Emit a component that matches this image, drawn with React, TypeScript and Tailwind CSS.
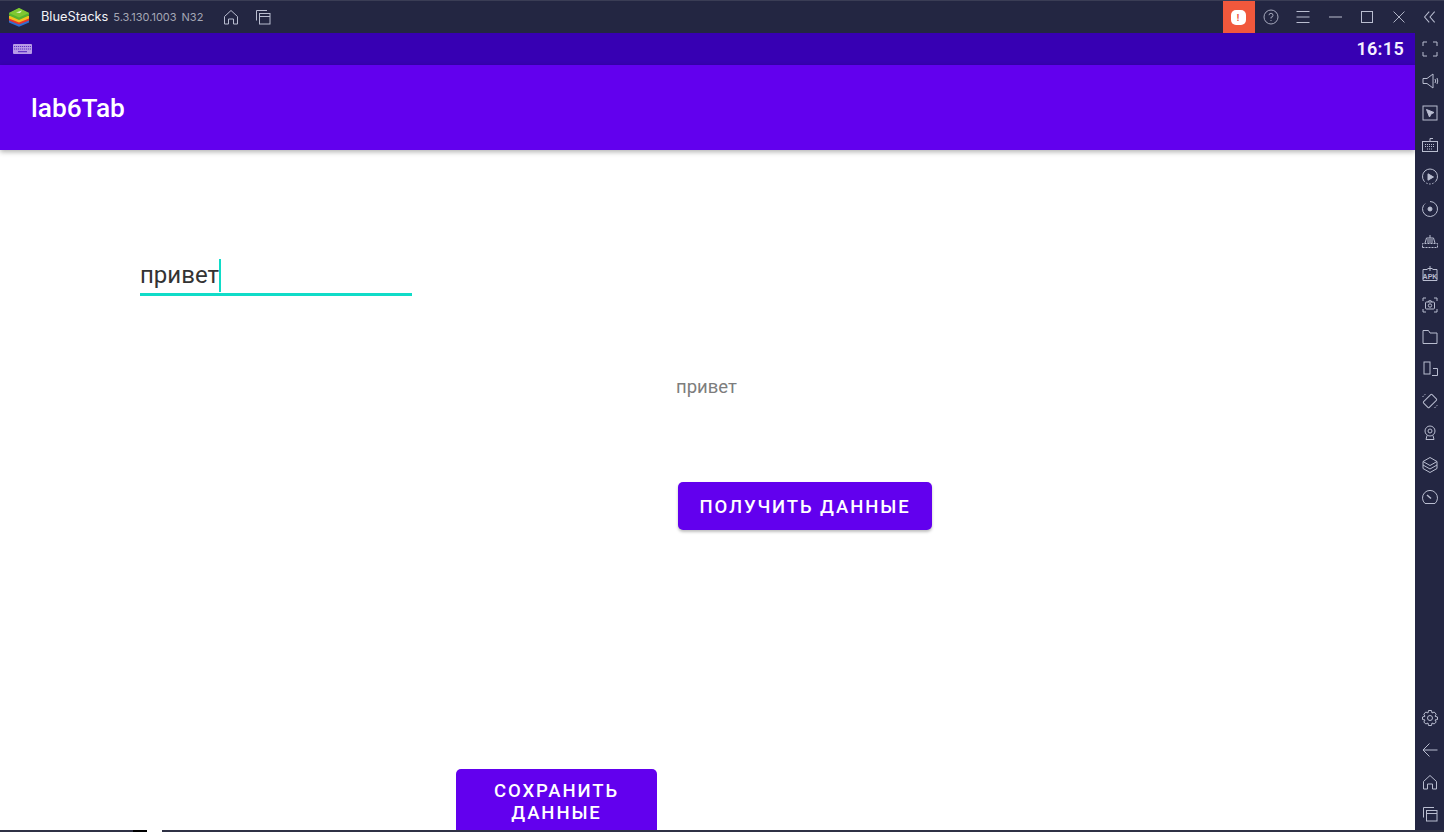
import React from 'react';

const stroke = '#b9bdd0';

const Ico: React.FC<{ size?: number; children: React.ReactNode }> = ({ size = 18, children }) => (
  <svg width={size} height={size} viewBox="0 0 18 18" fill="none" stroke={stroke} strokeWidth="1" className="block">
    {children}
  </svg>
);

const Logo = () => (
  <svg width="22" height="20" viewBox="0 0 22 20" className="block">
    <path d="M11 9 L21 13 L21 15.5 L11 19.8 L1 15.5 L1 13Z" fill="#2f6fd0" />
    <path d="M11 7 L21 11 L21 13.5 L11 17.5 L1 13.5 L1 11Z" fill="#e8352c" />
    <path d="M11 5 L21 9 L21 11.5 L11 15.5 L1 11.5 L1 9Z" fill="#f4c020" />
    <path d="M11 1 L21 6 L21 8.5 L11 13 L1 8.5 L1 6Z" fill="#55b32f" />
    <path d="M11 1 L21 6 L11 10.5 L1 6Z" fill="#7fc832" />
    <path d="M8 5.5 L14 3.5 L12 6 Z" fill="#e8f5d0" />
  </svg>
);

const HomeIcon = ({ size = 18 }: { size?: number }) => (
  <Ico size={size}>
    <path d="M2.5 8.5 L9 2.5 L15.5 8.5 V16 H11.5 V11 H6.5 V16 H2.5Z" strokeLinejoin="round" />
  </Ico>
);

const RecentsIcon = ({ size = 18 }: { size?: number }) => (
  <Ico size={size}>
    <path d="M2.5 12.5 V2.5 H13" />
    <rect x="5.5" y="5.5" width="10.5" height="10.5" />
    <path d="M5.5 8.5 H16" />
  </Ico>
);

const sideTop: React.ReactNode[] = [
  <path key="a" d="M2 6 V2 H6 M12 2 H16 V6 M16 12 V16 H12 M6 16 H2 V12" />,
  <g key="b"><path d="M2 6.5 H6 L12 2 V16 L6 11.5 H2Z" strokeLinejoin="round" /><path d="M14 7 Q15.5 9 14 11 M16 6 Q17.5 9 16 12" /></g>,
  <g key="c"><rect x="2" y="2" width="14" height="14" /><path d="M5.5 5.5 L13 8.5 L10 10 L8.5 13Z" fill={stroke} /></g>,
  <g key="d"><rect x="1.5" y="5.5" width="15" height="10" /><path d="M9 5.5 V2.5 H12" /><path d="M4 8.5 H14 M4 10.5 H14 M6 13 H12" strokeDasharray="1 1" /></g>,
  <g key="e"><path d="M3 13 A7.5 7.5 0 1 1 15 13" /><path d="M3 13 A7.5 7.5 0 0 0 15 13" strokeDasharray="1.5 1.5" /><path d="M7 5.8 L12.5 9 L7 12.2Z" fill={stroke} /></g>,
  <g key="f"><path d="M9 1.5 A7.5 7.5 0 1 1 2.5 5.3" /><path d="M2.5 5.3 L5 3" strokeDasharray="1.5 1.5" /><circle cx="9" cy="9" r="2" fill={stroke} /></g>,
  <g key="g"><path d="M1.5 15.5 H16.5 M1.5 15.5 V11.5 H16.5 V15.5" strokeDasharray="2 1" /><path d="M4 11 L5.5 6 H12.5 L14 11 M7 7 V11 M9 7 V11 M11 7 V11 M9 6 V3" /></g>,
  <g key="h"><path d="M2 16.5 V5.5 H6.5 M11.5 5.5 H16 V16.5 H2" /><path d="M9 2 V7 M6.5 4.5 H11.5" /><text x="9" y="14.5" fontSize="7" fontWeight="700" textAnchor="middle" fill={stroke} stroke="none" fontFamily="'Liberation Sans', sans-serif">APK</text></g>,
  <g key="i"><path d="M2 5 V2 H5 M13 2 H16 V5 M16 13 V16 H13 M5 16 H2 V13" /><rect x="4.5" y="6" width="9" height="7" rx="1" /><path d="M7 6 L7.8 4.8 H10.2 L11 6" /><circle cx="9" cy="9.5" r="1.7" /></g>,
  <path key="j" d="M2 15.5 V2.5 H7.5 L9 5 H16 V15.5Z" />,
  <g key="k"><rect x="3" y="2" width="6" height="12" /><path d="M12 8.5 H16.5 V15.5 H11" /></g>,
  <g key="l"><rect x="5" y="3" width="8" height="12" rx="1" transform="rotate(45 9 9)" /><path d="M1.5 5 L4.5 2 M13.5 16 L16.5 13" strokeDasharray="1.5 1" /></g>,
  <g key="m"><circle cx="9" cy="7" r="5" /><circle cx="9" cy="7" r="2" /><path d="M6 11.5 L5 15.5 H13 L12 11.5" /></g>,
  <g key="n"><path d="M9 1.5 L16 5.5 L9 9.5 L2 5.5Z" /><path d="M2 5.5 V12.5 L9 16.5 L16 12.5 V5.5" /><path d="M2 9 L9 13 L16 9" /></g>,
  <g key="o"><path d="M4 15.5 A7.5 7.5 0 1 1 14 15.5Z" /><path d="M6 7 L10 10.5" strokeWidth="1.5" /></g>,
];

const sideBottom: React.ReactNode[] = [
  <g key="a"><circle cx="9" cy="9" r="2.5" /><path d="M7.5 1.5 H10.5 L11 4 L13.2 3 L15.2 5.2 L14 7.2 L16.5 8 V10.5 L14 11 L15.2 13 L13.2 15 L11 14 L10.5 16.5 H7.5 L7 14 L4.8 15 L2.8 13 L4 11 L1.5 10.5 V8 L4 7.2 L2.8 5.2 L4.8 3 L7 4Z" strokeLinejoin="round" /></g>,
  <path key="b" d="M16.5 9 H2 M8.5 2.5 L2 9 L8.5 15.5" />,
];

const App: React.FC = () => {
  return (
    <div className="w-[1444px] h-[832px] overflow-hidden flex flex-col bg-[#232642] font-['Inter',sans-serif]">
      {/* BlueStacks title bar */}
      <header className="h-[33px] shrink-0 flex items-center border-t border-t-[#3a3d55] bg-[#232642]">
        <div className="ml-[8px]"><Logo /></div>
        <span className="ml-[11px] text-[12.8px] text-[#f2f3f8]">BlueStacks</span>
        <span className="ml-[5px] text-[11px] text-[#a5a7b5]">5.3.130.1003</span>
        <span className="ml-[5px] text-[11px] text-[#a5a7b5]">N32</span>
        <div className="ml-[19px]"><HomeIcon /></div>
        <div className="ml-[14px]"><RecentsIcon /></div>
        <div className="ml-auto flex items-center h-full">
          <div className="w-[32px] h-[32px] bg-[#f1583c] flex items-center justify-center pr-[2px]">
            <div className="w-[15px] h-[15px] rounded-[5px] bg-white flex items-center justify-center text-[#f1583c] text-[9px] font-bold leading-none">!</div>
          </div>
          <div className="w-[32px] flex justify-center pr-[1px]">
            <svg width="16" height="16" viewBox="0 0 16 16" fill="none" stroke="#a5a8bc" className="block">
              <circle cx="8" cy="8" r="7" />
              <path d="M6 6.2 A2 2 0 1 1 8 8.3 V9.5 M8 11 V12" />
            </svg>
          </div>
          <div className="w-[32px] flex justify-center"><Ico><path d="M2.5 3.5 H15.5 M2.5 9 H15.5 M2.5 14.5 H15.5" /></Ico></div>
          <div className="w-[32px] flex justify-center"><div className="w-[13px] h-[2px] bg-[#6f7288]" /></div>
          <div className="w-[32px] flex justify-center"><div className="w-[12px] h-[12px] border border-[#b9bdd0]" /></div>
          <div className="w-[32px] flex justify-center"><Ico size={14}><path d="M2 2 L16 16 M16 2 L2 16" strokeWidth="1.2" /></Ico></div>
          <div className="w-[29px] flex justify-center"><Ico size={14}><path d="M8 2 L2 9 L8 16 M15 2 L9 9 L15 16" strokeWidth="1.3" /></Ico></div>
        </div>
      </header>

      <div className="flex-1 min-h-0 flex">
        {/* Android screen */}
        <main className="w-[1415px] h-[797px] flex flex-col overflow-hidden bg-white font-['Roboto',sans-serif]">
          <div className="h-[32px] shrink-0 bg-[#3700b3] flex items-center justify-between pl-[13px] pr-[11px]">
            <svg width="19" height="10" viewBox="0 0 19 10" className="block">
              <rect width="19" height="10" rx="1" fill="#b79be6" />
              <path d="M1 2.5 H18 M1 5 H18" stroke="#3700b3" strokeWidth="0.7" strokeDasharray="1.2 0.8" />
              <path d="M5 7.7 H14" stroke="#3700b3" strokeWidth="0.8" />
            </svg>
            <span className="text-[18px] font-semibold leading-none text-[#f5f0ff] tracking-[0.3px]">16:15</span>
          </div>
          <div className="h-[85px] shrink-0 bg-[#6200ee] shadow-[0_2px_5px_rgba(0,0,0,0.3)] z-10 flex items-center pl-[31px] pt-[2px]">
            <span className="text-[26.3px] font-medium text-white leading-none">lab6Tab</span>
          </div>

          <div className="flex-1 min-h-0 flex flex-col">
            {/* input */}
            <div className="ml-[140px] mt-[108px] w-[272px] h-[38px] shrink-0 border-b-[3px] border-b-[#10dcc8] flex items-end">
              <span className="text-[24px] leading-[36px] text-[#333333]">привет</span>
              <span className="w-[2px] h-[33px] bg-[#10dcc8] mb-[1px]" />
            </div>

            <div className="ml-[676px] mt-[81px] shrink-0 text-[18.5px] leading-[21px] text-[#7d7d7d]">привет</div>

            <button className="ml-[678px] mt-[84px] w-[254px] h-[48px] shrink-0 rounded-[5px] bg-[#6200ee] text-white text-[18.5px] font-medium tracking-[1.9px] pt-[4px] shadow-[0_2px_3px_rgba(0,0,0,0.25)]">
              ПОЛУЧИТЬ ДАННЫЕ
            </button>

            <button className="ml-[456px] mt-[239px] w-[201px] h-[72px] shrink-0 rounded-[5px] bg-[#6200ee] text-white text-[18.5px] font-medium tracking-[1.9px] leading-[22px] pt-[11px] flex flex-col items-center justify-start">
              <span>СОХРАНИТЬ</span>
              <span>ДАННЫЕ</span>
            </button>
          </div>
        </main>

        {/* right sidebar */}
        <aside className="flex-1 flex flex-col items-center pt-[7px] pb-[7px]">
          <div className="flex flex-col items-center gap-[14px]">
            {sideTop.map((icon, i) => (
              <Ico key={i}>{icon}</Ico>
            ))}
          </div>
          <div className="mt-auto flex flex-col items-center gap-[14px]">
            {sideBottom.map((icon, i) => (
              <Ico key={i}>{icon}</Ico>
            ))}
            <HomeIcon />
            <RecentsIcon />
          </div>
        </aside>
      </div>

      {/* sliver of the desktop taskbar */}
      <div className="h-[2px] shrink-0 bg-[#2f3145] flex">
        <div className="ml-[133px] w-[14px] bg-black" />
        <div className="w-[15px] bg-white" />
      </div>
    </div>
  );
};

export default App;
